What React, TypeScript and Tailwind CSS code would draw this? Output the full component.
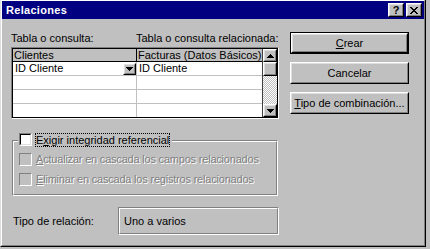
import React from 'react';

const font = "font-['Liberation_Sans',Arial,sans-serif]";

const Raised = ({ className = '', children }: { className?: string; children?: React.ReactNode }) => (
  <div className={`flex border border-t-white border-l-white border-r-black border-b-black ${className}`}>
    <div className="flex flex-1 items-center justify-center border border-t-[#dfdfdf] border-l-[#dfdfdf] border-r-[#808080] border-b-[#808080] bg-[#c0c0c0]">
      {children}
    </div>
  </div>
);

const Tri = ({ up }: { up?: boolean }) => (
  <svg width="7" height="4" viewBox="0 0 7 4" shapeRendering="crispEdges">
    {up ? (
      <path d="M3 0h1v1h1v1h1v1h1v1H0V3h1V2h1V1h1z" fill="#000" />
    ) : (
      <path d="M0 0h7v1H6v1H5v1H4v1H3V3H2V2H1V1H0z" fill="#000" />
    )}
  </svg>
);

const CloseGlyph = () => (
  <svg width="8" height="7" viewBox="0 0 8 7" shapeRendering="crispEdges">
    <path
      d="M0 0h2v1H0zM6 0h2v1H6zM1 1h2v1H1zM5 1h2v1H5zM2 2h4v1H2zM3 3h2v1H3zM2 4h4v1H2zM1 5h2v1H1zM5 5h2v1H5zM0 6h2v1H0zM6 6h2v1H6z"
      fill="#000"
    />
  </svg>
);

const Check = ({ disabled }: { disabled?: boolean }) =>
  disabled ? (
    <span className="flex w-[13px] h-[13px] border border-t-[#808080] border-l-[#808080] border-r-white border-b-white bg-[#c0c0c0]" />
  ) : (
    <span className="flex w-[13px] h-[13px] border border-t-[#808080] border-l-[#808080] border-r-white border-b-white">
      <span className="flex-1 border border-t-black border-l-black border-r-[#dfdfdf] border-b-[#dfdfdf] bg-white" />
    </span>
  );

// etched frame, gray line with a white line next to it
const Etched = ({ className = '', innerClass = '', children }: { className?: string; innerClass?: string; children?: React.ReactNode }) => (
  <div className={`flex border border-t-[#808080] border-l-[#808080] border-r-white border-b-white ${className}`}>
    <div className={`flex-1 border border-t-white border-l-white border-r-[#808080] border-b-[#808080] ${innerClass}`}>
      {children}
    </div>
  </div>
);

const disabledText = 'text-[#808080] tracking-[-0.2px] [text-shadow:1px_1px_0_#ffffff]';

export default function App() {
  const rows = ['ID Cliente', '', '', ''];

  return (
    <div className={`w-[430px] h-[249px] bg-[#c0c0c0] text-[11px] leading-[13px] text-black ${font}`}>
      <div className="w-[426px] h-[247px] flex border-l border-r border-b border-l-[#dfdfdf] border-r-black border-b-black">
        <div className="flex-1 flex flex-col border border-t-white border-l-white border-r-[#808080] border-b-[#808080]">
          {/* Title bar */}
          <div className="h-[18px] flex items-center bg-[#000080] pl-[4px] pr-[2px]">
            <span className="flex-1 text-white font-bold tracking-[0.3px]">Relaciones</span>
            <Raised className="w-[16px] h-[14px]">
              <span className="font-bold text-[11px] leading-[10px]">?</span>
            </Raised>
            <Raised className="w-[16px] h-[14px] ml-[2px]">
              <CloseGlyph />
            </Raised>
          </div>

          <div className="flex pl-[9px] pt-[13px]">
            {/* Left column */}
            <div className="w-[268px] flex flex-col">
              <div className="grid grid-cols-[125px_1fr] h-[13px] whitespace-nowrap">
                <span>Tabla o consulta:</span>
                <span>Tabla o consulta relacionada:</span>
              </div>

              {/* Field grid */}
              <div className="mt-[2px] border border-t-[#808080] border-l-[#808080] border-r-white border-b-white">
                <div className="flex border border-black bg-white">
                  <div className="flex-1 flex flex-col">
                    <div className="grid grid-cols-[124px_1fr] h-[13px] border-b border-black bg-[#c0c0c0]">
                      <span className="pl-[1px] border-r border-black leading-[12px]">Clientes</span>
                      <span className="pl-[1px] leading-[12px] whitespace-nowrap overflow-hidden">Facturas (Datos Básicos)</span>
                    </div>
                    {rows.map((r, i) => (
                      <div
                        key={i}
                        className={`grid grid-cols-[124px_1fr] ${i < 3 ? 'h-[14px] border-b border-[#c0c0c0]' : 'h-[13px]'}`}
                      >
                        <div className="flex border-r border-[#c0c0c0]">
                          <span className="flex-1 pl-[2px] leading-[13px]">{r}</span>
                          {i === 0 && (
                            <Raised className="w-[13px] h-[12px] self-end">
                              <Tri />
                            </Raised>
                          )}
                        </div>
                        <span className="pl-[2px] leading-[13px]">{r}</span>
                      </div>
                    ))}
                  </div>

                  {/* Scroll bar */}
                  <div className="w-[15px] flex flex-col border-l border-[#404040]">
                    <Raised className="h-[13px]">
                      <Tri up />
                    </Raised>
                    <Raised className="h-[14px]" />
                    <div className="h-[28px] bg-[repeating-conic-gradient(#ffffff_0%_25%,#c0c0c0_0%_50%)] bg-[length:2px_2px]" />
                    <Raised className="h-[13px]">
                      <Tri />
                    </Raised>
                  </div>
                </div>
              </div>

              {/* Integrity group */}
              <Etched className="mt-[21px] ml-[1px] w-[266px]" innerClass="flex flex-col gap-[7px] pl-[5px] pb-[8px]">
                <div className="-mt-[9px] -ml-[1px] pl-[1px] pr-[2px] self-start flex items-center h-[13px] bg-[#c0c0c0]">
                  <Check />
                  <span className="ml-[3px] h-[14px] border border-dotted border-black leading-[12px] whitespace-nowrap">
                    E<u>x</u>igir integridad referencial
                  </span>
                </div>
                <div className="flex items-center h-[13px]">
                  <Check disabled />
                  <span className={`ml-[4px] whitespace-nowrap ${disabledText}`}>
                    <u>A</u>ctualizar en cascada los campos relacionados
                  </span>
                </div>
                <div className="flex items-center h-[13px]">
                  <Check disabled />
                  <span className={`ml-[4px] whitespace-nowrap ${disabledText}`}>
                    <u>E</u>liminar en cascada los registros relacionados
                  </span>
                </div>
              </Etched>

              {/* Relation type */}
              <div className="mt-[11px] flex items-center">
                <span className="w-[107px] pl-[2px]">Tipo de relación:</span>
                <Etched className="w-[161px] h-[28px]" innerClass="flex items-center pl-[4px]">
                  <span>Uno a varios</span>
                </Etched>
              </div>
            </div>

            {/* Buttons */}
            <div className="ml-[11px] flex flex-col gap-[8px]">
              <div className="w-[119px] h-[22px] flex border border-black">
                <Raised className="flex-1">
                  <span>
                    <u>C</u>rear
                  </span>
                </Raised>
              </div>
              <Raised className="w-[119px] h-[22px]">
                <span>Cancelar</span>
              </Raised>
              <Raised className="w-[119px] h-[22px]">
                <span>
                  <u>T</u>ipo de combinación...
                </span>
              </Raised>
            </div>
          </div>
        </div>
      </div>
    </div>
  );
}
